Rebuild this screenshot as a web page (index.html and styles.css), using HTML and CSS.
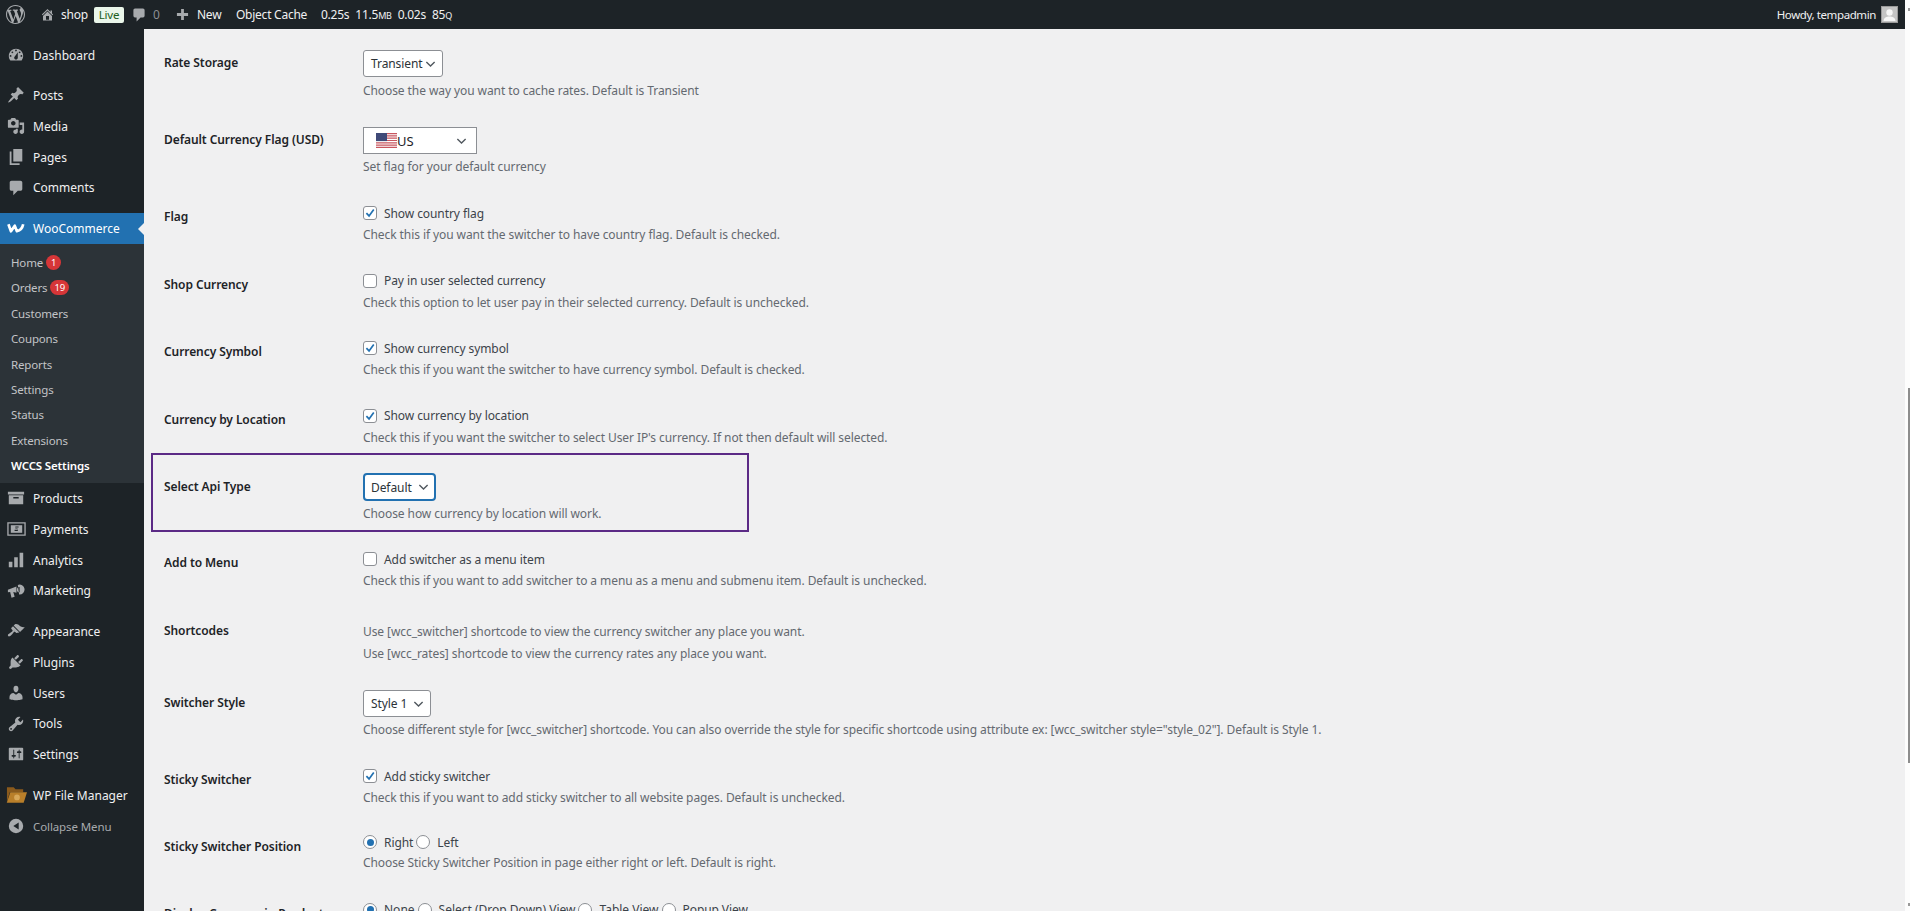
FILE: index.html
```html
<!DOCTYPE html>
<html lang="en">
<head>
<meta charset="utf-8">
<title>WCCS Settings</title>
<link rel="stylesheet" href="styles.css">
</head>
<body>
<svg class="defs" width="0" height="0" aria-hidden="true">
  <symbol id="i-chev" viewBox="0 0 12 8"><path d="M1.5 1.8 6 6.2l4.5-4.4" fill="none" stroke="#50575e" stroke-width="1.5"/></symbol>
  <symbol id="i-tick" viewBox="0 0 14 14"><path d="M2.8 7.2 5.9 10.4 11.4 2.8" fill="none" stroke="#2271b1" stroke-width="2"/></symbol>
</svg>
<div class="app">
  <header class="topbar">
    <div class="topbar-left">
      <svg class="tb-wp" viewBox="0 0 20 20"><path d="M20 10c0-5.51-4.49-10-10-10C4.48 0 0 4.49 0 10c0 5.52 4.48 10 10 10 5.51 0 10-4.48 10-10zM7.78 15.37L4.37 6.22c.55-.02 1.17-.08 1.17-.08.5-.06.44-1.13-.06-1.11 0 0-1.45.11-2.37.11-.18 0-.37 0-.58-.01C4.12 2.69 6.87 1.11 10 1.11c2.33 0 4.45.87 6.05 2.34-.68-.11-1.65.39-1.65 1.58 0 .74.45 1.36.9 2.1.35.61.55 1.36.55 2.46 0 1.49-1.4 5-1.4 5l-3.03-8.37c.54-.02.82-.17.82-.17.5-.05.44-1.25-.06-1.22 0 0-1.44.12-2.38.12-.87 0-2.33-.12-2.33-.12-.5-.03-.56 1.2-.06 1.22l.92.08 1.26 3.41zM17.41 10c.24-.64.74-1.87.43-4.25.7 1.29 1.05 2.71 1.05 4.25 0 3.29-1.73 6.24-4.4 7.78.97-2.59 1.94-5.2 2.92-7.78zM6.1 18.09C3.12 16.65 1.11 13.53 1.11 10c0-1.3.23-2.48.72-3.59C3.25 10.3 4.67 14.2 6.1 18.09zm4.03-6.63l2.58 6.98c-.86.29-1.76.45-2.71.45-.79 0-1.57-.11-2.29-.33.81-2.38 1.62-4.74 2.42-7.1z"/></svg>
      <svg class="tb-home" viewBox="0 0 20 20"><path d="M16 8.5l1.53 1.53-1.06 1.06L10 4.62l-6.47 6.47-1.06-1.06L10 2.5l4 4v-2h2v4zm-6-2.46l6 5.99V18H4v-5.97zM12 17v-5H8v5h4z"/></svg>
      <span class="tb-shop">shop</span>
      <span class="tb-live">Live</span>
      <svg class="tb-comment" viewBox="0 0 20 20"><path d="M5 2h10c1.1 0 2 .9 2 2v7c0 1.1-.9 2-2 2h-3l-5 5v-5H5c-1.1 0-2-.9-2-2V4c0-1.1.9-2 2-2z"/></svg>
      <span class="tb-zero">0</span>
      <svg class="tb-plus" viewBox="0 0 14 14"><path d="M5.5 1h3v4.5H13v3H8.5V13h-3V8.5H1v-3h4.5z"/></svg>
      <span class="tb-new">New</span>
      <span class="tb-cache">Object Cache</span>
      <span class="tb-stats"><span>0.25s</span><span>11.5<small>MB</small></span><span>0.02s</span><span>85<small>Q</small></span></span>
    </div>
    <div class="topbar-right">
      <span>Howdy, tempadmin</span>
      <svg class="avatar" viewBox="0 0 17 17"><rect width="17" height="17" fill="#c4c4c4"/><circle cx="8.5" cy="6.5" r="3.2" fill="#f6f6f6"/><path d="M2.5 15c.4-3.6 3-4.6 6-4.6s5.6 1 6 4.6z" fill="#f6f6f6"/><rect x=".5" y=".5" width="16" height="16" fill="none" stroke="#9a9a9a"/></svg>
    </div>
  </header>
  <div class="workspace">
    <nav class="sidebar">
      <ul class="menu menu-first">
        <li class="item"><svg viewBox="0 0 20 20"><path d="M3.76 16h12.48A7.94 7.94 0 0 0 18 11c0-4.42-3.58-8-8-8s-8 3.58-8 8c0 1.9.66 3.63 1.76 5zM10 4c.55 0 1 .45 1 1s-.45 1-1 1-1-.45-1-1 .45-1 1-1zM6 6c.55 0 1 .45 1 1s-.45 1-1 1-1-.45-1-1 .45-1 1-1zm8 0c.55 0 1 .45 1 1s-.45 1-1 1-1-.45-1-1 .45-1 1-1zm-5.37 5.55L12 7v6c0 1.1-.9 2-2 2s-2-.9-2-2c0-.57.24-1.08.63-1.45zM4 10c.55 0 1 .45 1 1s-.45 1-1 1-1-.45-1-1 .45-1 1-1zm12 0c.55 0 1 .45 1 1s-.45 1-1 1-1-.45-1-1 .45-1 1-1z"/></svg>Dashboard</li>
      </ul>
      <ul class="menu">
        <li class="item"><svg viewBox="0 0 20 20"><path d="M10.44 3.02l1.82-1.82 6.36 6.35-1.83 1.82c-1.05-.68-2.48-.57-3.41.36l-.75.75c-.92.93-1.04 2.35-.35 3.41l-1.83 1.82-2.41-2.41-2.8 2.79c-.42.42-3.38 2.71-3.8 2.29s1.86-3.39 2.28-3.81l2.79-2.79L4.1 9.36l1.83-1.82c1.05.69 2.48.57 3.4-.36l.75-.75c.93-.92 1.05-2.35.36-3.41z"/></svg>Posts</li>
        <li class="item"><svg viewBox="0 0 20 20"><path d="M13 11V4c0-.55-.45-1-1-1h-1.67L9 1H5L3.67 3H2c-.55 0-1 .45-1 1v7c0 .55.45 1 1 1h10c.55 0 1-.45 1-1zM7 4.5c1.38 0 2.5 1.12 2.5 2.5S8.38 9.5 7 9.5 4.5 8.38 4.5 7 5.62 4.5 7 4.5zM14 6h5v10.5c0 1.38-1.12 2.5-2.5 2.5S14 17.88 14 16.5s1.12-2.5 2.5-2.5c.17 0 .34.02.5.05V9h-3V6zm-4 8.05V13h2v3.5c0 1.38-1.12 2.5-2.5 2.5S7 17.88 7 16.5 8.12 14 9.5 14c.17 0 .34.02.5.05z"/></svg>Media</li>
        <li class="item"><svg viewBox="0 0 20 20"><path d="M7 1h10v14H7zM5 4v13h9v2H3V4z"/></svg>Pages</li>
        <li class="item"><svg viewBox="0 0 20 20"><path d="M5 2h10c1.1 0 2 .9 2 2v7c0 1.1-.9 2-2 2h-3l-5 5v-5H5c-1.1 0-2-.9-2-2V4c0-1.1.9-2 2-2z"/></svg>Comments</li>
      </ul>
      <div class="woo-head">
        <svg class="woo-logo" viewBox="0 0 20 12"><path d="M1.6 1.8 4.4 9.6 8.6 3.4 11 9.6c2.5-.5 6-3 7-7.8" fill="none" stroke="#fff" stroke-width="3" stroke-linejoin="round"/></svg>
        WooCommerce
      </div>
      <ul class="submenu">
        <li>Home <span class="count">1</span></li>
        <li>Orders <span class="count">19</span></li>
        <li>Customers</li>
        <li>Coupons</li>
        <li>Reports</li>
        <li>Settings</li>
        <li>Status</li>
        <li>Extensions</li>
        <li class="current">WCCS Settings</li>
      </ul>
      <ul class="menu">
        <li class="item"><svg viewBox="0 0 20 20"><path d="M19 3v3H1V3zM2 7h16v10H2zm5 2v1.5h6V9z"/></svg>Products</li>
        <li class="item"><svg class="wide" viewBox="0 0 20 16"><path d="M1 1.5h18v13H1z" fill="none" stroke="#a7aaad" stroke-width="1.4"/><rect x="4" y="4" width="12" height="8"/><path d="M12.2 5.3H8.8v2.2h2.400v1.400H8v1.200h3.400V7.900H9v-1.400h3.200z" fill="#1d2327"/></svg>Payments</li>
        <li class="item"><svg viewBox="0 0 20 20"><path d="M2 12h4v6H2zM8 7h4v11H8zM14 2h4v16h-4z"/></svg>Analytics</li>
        <li class="item"><svg viewBox="0 0 20 20"><path d="M1 8.5 10.5 5v7L7 11l1.500 5.500-3.500 1-1.500-6.500L1 11.500zM12 3.200a5.500 5.500 0 1 1 1.500 10.600zM14 5.500a3 3 0 0 0 0 6z"/></svg>Marketing</li>
      </ul>
      <ul class="menu">
        <li class="item"><svg viewBox="0 0 20 20"><path d="M14.48 11.06L7.41 3.99l1.5-1.5c.5-.56 2.3-.47 3.51.32 1.21.8 1.43 1.28 2.91 2.1 1.18.64 2.45 1.26 4.45.85zm-.71.71L6.7 4.7 4.93 6.47c-.39.39-.39 1.02 0 1.41l1.06 1.06c.39.39.39 1.03 0 1.42-.6.6-1.43 1.11-2.21 1.69-.35.26-.7.53-1.01.84C1.43 13.23.4 14.75 1.32 15.67c.92.92 2.44-.11 3.78-1.45.31-.31.58-.66.84-1.01.58-.78 1.09-1.61 1.69-2.21.39-.39 1.03-.39 1.42 0l1.06 1.06c.39.39 1.02.39 1.41 0z"/></svg>Appearance</li>
        <li class="item"><svg viewBox="0 0 20 20"><path d="M13.11 4.36L9.87 7.6 8 5.73l3.24-3.24c.35-.34 1.05-.2 1.56.32.52.51.66 1.21.31 1.55zm-8 1.77l.91-1.12 9.01 9.01-1.19.84c-.71.71-2.63 1.16-3.82 1.16H6.14L4.9 17.26c-.59.59-1.54.59-2.12 0-.59-.58-.59-1.53 0-2.12l1.24-1.24v-3.88c0-1.13.4-3.19 1.09-3.89zm7.26 3.97l3.24-3.24c.34-.35 1.04-.21 1.55.31.52.51.66 1.21.31 1.55l-3.24 3.25z"/></svg>Plugins</li>
        <li class="item"><svg viewBox="0 0 20 20"><path d="M10 9.25c-2.27 0-2.73-3.44-2.73-3.44C7 4.02 7.82 2 9.97 2c2.16 0 2.98 2.02 2.71 3.81 0 0-.41 3.44-2.68 3.44zm0 2.57L12.72 10c2.39 0 4.52 2.33 4.52 4.53v2.49s-3.65 1.13-7.24 1.13c-3.65 0-7.24-1.13-7.24-1.13v-2.49c0-2.25 1.94-4.48 4.47-4.48z"/></svg>Users</li>
        <li class="item"><svg viewBox="0 0 20 20"><path d="M16.68 9.77c-1.34 1.34-3.3 1.67-4.95.99l-5.41 6.52c-.99.99-2.59.99-3.58 0s-.99-2.59 0-3.57l6.52-5.42c-.68-1.65-.35-3.61.99-4.95 1.28-1.28 3.12-1.62 4.72-1.06l-2.89 2.89 2.82 2.82 2.86-2.87c.53 1.58.18 3.39-1.08 4.65zM3.81 16.21c.4.39 1.04.39 1.43 0 .4-.4.4-1.04 0-1.43-.39-.4-1.03-.4-1.43 0-.39.39-.39 1.03 0 1.43z"/></svg>Tools</li>
        <li class="item"><svg viewBox="0 0 20 20"><path d="M18 16V4c0-.55-.45-1-1-1H3c-.55 0-1 .45-1 1v12c0 .55.45 1 1 1h14c.55 0 1-.45 1-1zM8 11h1c.55 0 1 .45 1 1s-.45 1-1 1H8v1.5c0 .28-.22.5-.5.5s-.5-.22-.5-.5V13H6c-.55 0-1-.45-1-1s.45-1 1-1h1V5.5c0-.28.22-.5.5-.5s.5.22.5.5V11zm5-2h-1c-.55 0-1-.45-1-1s.45-1 1-1h1V5.5c0-.28.22-.5.5-.5s.5.22.5.5V7h1c.55 0 1 .45 1 1s-.45 1-1 1h-1v5.5c0 .28-.22.5-.5.5s-.5-.22-.5-.5V9z"/></svg>Settings</li>
      </ul>
      <ul class="menu">
        <li class="item"><svg class="folder" viewBox="0 0 22 18"><path d="M1 1h7l2 2h8v3H4L1 16z" fill="#8a5a1c"/><path d="M4.5 6H22l-3.5 11H.8z" fill="#b97f2a"/><circle cx="11.5" cy="11.5" r="3" fill="#d8a85a"/></svg>WP File Manager</li>
        <li class="item collapse"><svg viewBox="0 0 20 20"><path d="M10 2a8 8 0 1 1 0 16 8 8 0 0 1 0-16zm3 4-6 4 6 4z"/></svg>Collapse Menu</li>
      </ul>
    </nav>
    <main class="content">
      <section class="row">
        <div class="label">Rate Storage</div>
        <div class="field"><div class="select select-rate">Transient<svg><use href="#i-chev"/></svg></div><p class="desc">Choose the way you want to cache rates. Default is Transient</p></div>
      </section>
      <section class="row">
        <div class="label">Default Currency Flag (USD)</div>
        <div class="field"><div class="select select-flag">
          <span class="flag-val"><svg class="flag" viewBox="0 0 21 15"><rect width="21" height="15" fill="#fff"/><path d="M0 0h21v1.2H0zM0 2.3h21v1.2H0zM0 4.6h21v1.2H0zM0 6.9h21v1.2H0zM0 9.2h21v1.2H0zM0 11.5h21v1.2H0zM0 13.8h21V15H0z" fill="#c8565f"/><rect width="11" height="8.1" fill="#3f4a78"/></svg>US</span>
          <svg><use href="#i-chev"/></svg></div><p class="desc">Set flag for your default currency</p></div>
      </section>
      <section class="row row-check">
        <div class="label">Flag</div>
        <div class="field"><div class="opt"><span class="check"><svg><use href="#i-tick"/></svg></span>Show country flag</div><p class="desc">Check this if you want the switcher to have country flag. Default is checked.</p></div>
      </section>
      <section class="row row-check">
        <div class="label">Shop Currency</div>
        <div class="field"><div class="opt"><span class="check"></span>Pay in user selected currency</div><p class="desc">Check this option to let user pay in their selected currency. Default is unchecked.</p></div>
      </section>
      <section class="row row-check">
        <div class="label">Currency Symbol</div>
        <div class="field"><div class="opt"><span class="check"><svg><use href="#i-tick"/></svg></span>Show currency symbol</div><p class="desc">Check this if you want the switcher to have currency symbol. Default is checked.</p></div>
      </section>
      <section class="row row-check">
        <div class="label">Currency by Location</div>
        <div class="field"><div class="opt"><span class="check"><svg><use href="#i-tick"/></svg></span>Show currency by location</div><p class="desc">Check this if you want the switcher to select User IP's currency. If not then default will selected.</p></div>
      </section>
      <section class="row row-api">
        <div class="annot"></div>
        <div class="label">Select Api Type</div>
        <div class="field"><div class="select select-focus">Default<svg><use href="#i-chev"/></svg></div><p class="desc">Choose how currency by location will work.</p></div>
      </section>
      <section class="row row-check">
        <div class="label">Add to Menu</div>
        <div class="field"><div class="opt"><span class="check"></span>Add switcher as a menu item</div><p class="desc">Check this if you want to add switcher to a menu as a menu and submenu item. Default is unchecked.</p></div>
      </section>
      <section class="row row-codes">
        <div class="label">Shortcodes</div>
        <div class="field"><p class="desc">Use [wcc_switcher] shortcode to view the currency switcher any place you want.</p><p class="desc">Use [wcc_rates] shortcode to view the currency rates any place you want.</p></div>
      </section>
      <section class="row">
        <div class="label">Switcher Style</div>
        <div class="field"><div class="select select-style">Style 1<svg><use href="#i-chev"/></svg></div><p class="desc">Choose different style for [wcc_switcher] shortcode. You can also override the style for specific shortcode using attribute ex: [wcc_switcher style="style_02"]. Default is Style 1.</p></div>
      </section>
      <section class="row row-check row-sticky">
        <div class="label">Sticky Switcher</div>
        <div class="field"><div class="opt"><span class="check"><svg><use href="#i-tick"/></svg></span>Add sticky switcher</div><p class="desc">Check this if you want to add sticky switcher to all website pages. Default is unchecked.</p></div>
      </section>
      <section class="row row-check row-radio">
        <div class="label">Sticky Switcher Position</div>
        <div class="field"><div class="opt"><span class="radio on"></span><span class="radio-text">Right</span><span class="radio"></span>Left</div><p class="desc">Choose Sticky Switcher Position in page either right or left. Default is right.</p></div>
      </section>
      <section class="row row-check row-display">
        <div class="label">Display Currency in Product</div>
        <div class="field"><div class="opt"><span class="radio on"></span><span class="radio-text">None</span><span class="radio"></span><span class="radio-text">Select (Drop Down) View</span><span class="radio"></span><span class="radio-text">Table View</span><span class="radio"></span>Popup View</div></div>
      </section>
    </main>
  </div>
</div>
<aside class="scrollbar" aria-hidden="true">
  <span class="sb-up"></span>
  <span class="sb-thumb"></span>
  <span class="sb-down"></span>
</aside>
</body>
</html>
```

FILE: styles.css
```css
* { box-sizing: border-box; }
html, body { height: 100%; }
body {
  margin: 0;
  display: flex;
  height: 911px;
  overflow: hidden;
  background: #f0f0f1;
  color: #1d2327;
  font-family: "Noto Sans", "Liberation Sans", sans-serif;
  font-size: 12px;
}
.defs { position: absolute; }
ul { list-style: none; margin: 0; padding: 0; }
p { margin: 0; }

.app { flex: 1; min-width: 0; display: flex; flex-direction: column; }

/* top bar */
.topbar {
  height: 29px;
  flex: none;
  background: #1d2327;
  color: #f0f0f1;
  display: flex;
  justify-content: space-between;
  align-items: center;
  padding: 0 7px 0 6px;
  font-size: 12px;
  letter-spacing: -0.25px;
  white-space: nowrap;
}
.topbar-left, .topbar-right { display: flex; align-items: center; }
.topbar svg { fill: #a7aaad; flex: none; }
.tb-wp { width: 19px; height: 19px; margin-right: 15px; }
.tb-home { width: 15px; height: 15px; margin-right: 6px; }
.tb-shop { width: 25px; }
.tb-live {
  margin-left: 8px;
  width: 30px;
  height: 16px;
  line-height: 16px;
  text-align: center;
  border-radius: 2px;
  background: #eaf6ea;
  color: #1c5e20;
  font-size: 11.5px;
}
.tb-comment { width: 16px; height: 16px; margin-left: 7px; }
.tb-zero { margin-left: 6px; color: #8c8f94; width: 8px; }
.tb-plus { width: 13px; height: 13px; margin-left: 15px; }
.tb-new { margin-left: 8px; width: 25px; }
.tb-cache { margin-left: 14px; width: 70px; }
.tb-stats { display: flex; gap: 6px; margin-left: 15px; }
.tb-stats small { font-size: 9px; }
.topbar-right { gap: 5px; font-size: 11.5px; letter-spacing: -0.4px; }
.avatar { width: 17px; height: 17px; }

/* sidebar */
.workspace { flex: 1; min-height: 0; display: flex; }
.sidebar {
  width: 144px;
  flex: none;
  background: #1d2327;
  padding-top: 11px;
  color: #f0f0f1;
}
.menu { margin-bottom: 10px; }
.menu-first { margin-bottom: 9.5px; }
.item {
  height: 30.75px;
  display: flex;
  align-items: center;
  padding-left: 33px;
  position: relative;
  white-space: nowrap;
}
.item svg {
  position: absolute;
  left: 7px;
  top: 6px;
  width: 18px;
  height: 18px;
  fill: #a7aaad;
}
.item svg.wide { width: 19px; height: 16px; top: 7px; }
.item svg.folder { left: 6px; width: 21px; height: 18px; }
.collapse { color: #a7aaad; font-size: 11.5px; letter-spacing: -0.1px; }
.woo-head {
  height: 31px;
  margin-top: -0.5px;
  background: #2271b1;
  color: #fff;
  display: flex;
  align-items: center;
  padding-left: 33px;
  position: relative;
}
.woo-head::after {
  content: "";
  position: absolute;
  right: 0;
  top: 10px;
  border: 6px solid transparent;
  border-right-color: #f0f0f1;
  border-left-width: 0;
}
.woo-logo { position: absolute; left: 7px; top: 9px; width: 18px; height: 12px; }
.submenu { background: #2c3338; padding: 6px 0 5px; margin-bottom: 0; }
.submenu li {
  height: 25.4px;
  display: flex;
  align-items: center;
  gap: 3px;
  padding-left: 11px;
  color: #c3c4c7;
  font-size: 11.5px;
  letter-spacing: -0.15px;
}
.submenu .current { color: #fff; font-weight: 600; }
.count {
  min-width: 15px;
  height: 15px;
  padding: 0 4px;
  border-radius: 8px;
  background: #d63638;
  color: #fff;
  font-size: 9.5px;
  line-height: 15px;
  text-align: center;
  letter-spacing: 0;
}

/* content */
.content {
  flex: 1;
  min-width: 0;
  padding: 6px 0 0 20px;
  overflow: hidden;
  letter-spacing: -0.08px;
}
.row {
  display: grid;
  grid-template-columns: 199px 1fr;
  height: 77px;
  padding-top: 15px;
  position: relative;
}
.row-check { height: 67.5px; }
.row-api { height: 76px; }
.row-codes { height: 72.5px; }
.row-sticky { height: 66px; }
.row-codes .field { padding-top: 3px; }
.row-codes .desc { margin-top: 0; line-height: 22px; }
.label {
  padding-top: 4px;
  font-size: 12px;
  font-weight: 600;
  line-height: 18px;
  white-space: nowrap;
}
.desc {
  margin-top: 4px;
  color: #646970;
  font-size: 12px;
  line-height: 18px;
  white-space: nowrap;
}
.row-radio .label { padding-top: 5px; }
.row-radio .desc { margin-top: 3px; }
.row-display .radio-text { letter-spacing: 0; }
.select {
  height: 27px;
  display: inline-flex;
  align-items: center;
  justify-content: space-between;
  background: #fff;
  border: 1px solid #8c8f94;
  border-radius: 3px;
  padding: 0 6px 0 7px;
  font-size: 12px;
  color: #2c3338;
  vertical-align: top;
}
.select svg { width: 11px; height: 8px; flex: none; }
.select-rate { width: 80px; }
.select-rate + .desc { margin-top: 5px; }
.select-flag { width: 114px; border-radius: 0; padding-right: 9px; color: #1d2327; font-size: 13px; }
.select-style { width: 68px; }
.select-focus { width: 73px; border: 2px solid #2271b1; border-radius: 4px; margin-top: -1px; height: 28px; padding: 0 5px 0 6px; }
.flag-val { display: flex; align-items: center; padding-left: 5px; }
.select .flag { width: 21px; height: 15px; }
.row-api .desc { margin-top: 4px; }
.opt { display: flex; align-items: center; height: 18px; white-space: nowrap; color: #3c434a; }
.check {
  width: 14px;
  height: 14px;
  margin-right: 7px;
  flex: none;
  background: #fff;
  border: 1px solid #8c8f94;
  border-radius: 3px;
  display: flex;
}
.check svg { width: 12px; height: 12px; }
.radio {
  width: 14px;
  height: 14px;
  margin-right: 7px;
  flex: none;
  background: #fff;
  border: 1px solid #8c8f94;
  border-radius: 50%;
  position: relative;
}
.radio.on::after {
  content: "";
  position: absolute;
  inset: 2.5px;
  border-radius: 50%;
  background: #2271b1;
}
.radio-text { margin-right: 3px; }
.annot {
  position: absolute;
  left: -13px;
  top: -6px;
  width: 598px;
  height: 79px;
  border: 2px solid #5b2a86;
  pointer-events: none;
}

/* scrollbar */
.scrollbar {
  width: 5px;
  flex: none;
  background: #fdfdfd;
  position: relative;
}
.sb-thumb {
  position: absolute;
  right: 0;
  top: 388px;
  width: 2px;
  height: 375px;
  background: #8d8d8d;
}
.sb-up, .sb-down {
  position: absolute;
  right: 0;
  width: 2px;
  height: 3px;
  background: #9a9a9a;
}
.sb-up { top: 8px; }
.sb-down { bottom: 5px; }
```
